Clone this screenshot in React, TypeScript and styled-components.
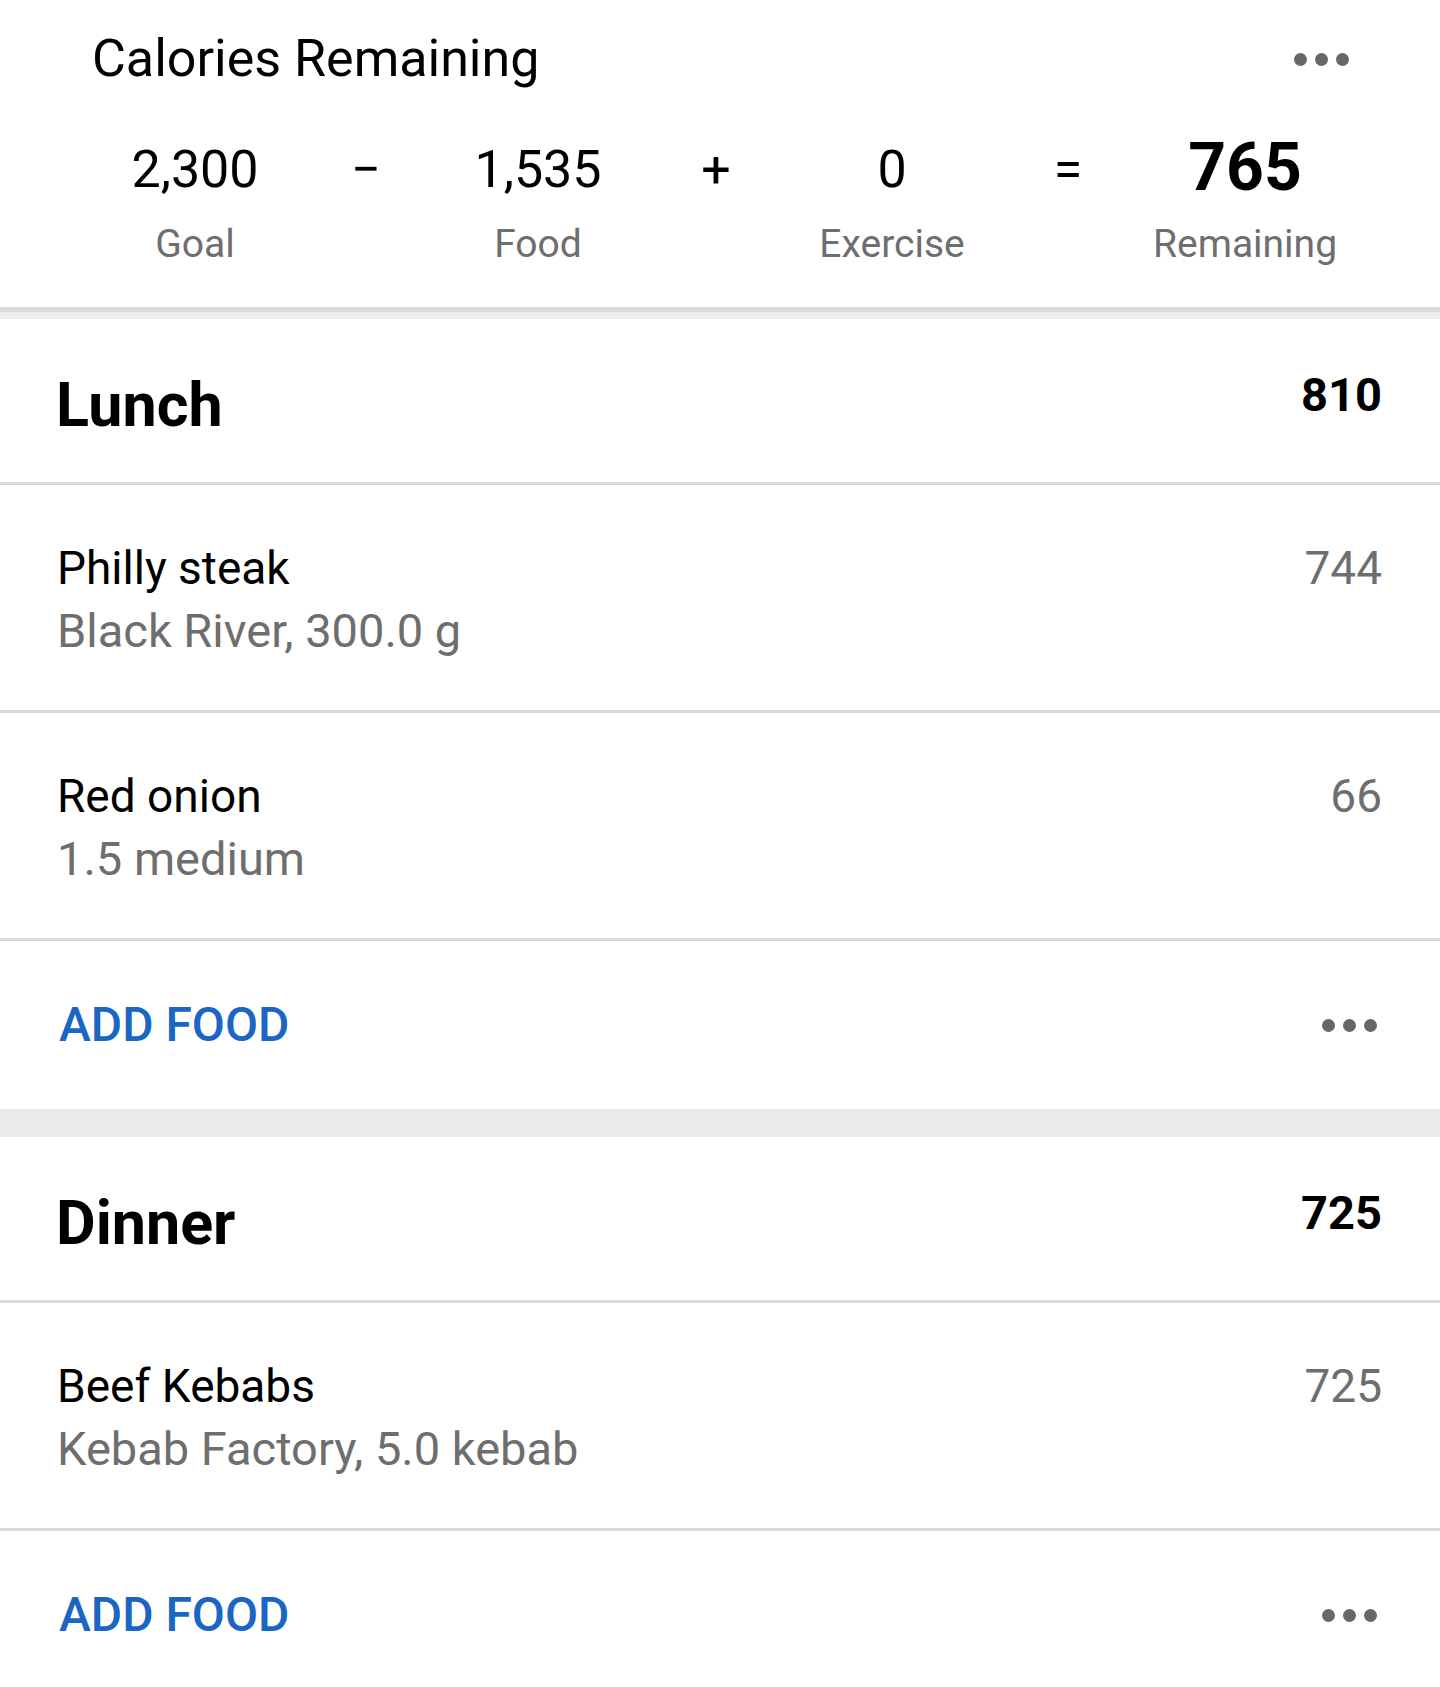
import React from 'react';
import styled, { createGlobalStyle } from 'styled-components';

const GlobalStyle = createGlobalStyle`
  html, body {
    margin: 0;
    padding: 0;
    background: #ffffff;
  }
  body {
    font-family: Roboto, "Liberation Sans", Arial, sans-serif;
    color: #000000;
  }
`;

type Food = { name: string; detail: string; calories: number };
type Meal = { title: string; total: number; foods: Food[] };

const MEALS: Meal[] = [
  {
    title: 'Lunch',
    total: 810,
    foods: [
      { name: 'Philly steak', detail: 'Black River, 300.0 g', calories: 744 },
      { name: 'Red onion', detail: '1.5 medium', calories: 66 },
    ],
  },
  {
    title: 'Dinner',
    total: 725,
    foods: [{ name: 'Beef Kebabs', detail: 'Kebab Factory, 5.0 kebab', calories: 725 }],
  },
];

const SUMMARY = [
  { value: '2,300', label: 'Goal' },
  { op: '−' },
  { value: '1,535', label: 'Food' },
  { op: '+' },
  { value: '0', label: 'Exercise' },
  { op: '=' },
  { value: '765', label: 'Remaining', strong: true },
];

function MoreDots() {
  return (
    <Dots>
      <Dot />
      <Dot />
      <Dot />
    </Dots>
  );
}

export default function App() {
  return (
    <Page>
      <GlobalStyle />
      <Summary>
        <SummaryTop>
          <SummaryTitle>Calories Remaining</SummaryTitle>
          <MoreDots />
        </SummaryTop>
        <Equation>
          {SUMMARY.map((item, i) =>
            'op' in item ? (
              <Operator key={i}>{item.op}</Operator>
            ) : (
              <Term key={i}>
                <TermValue $strong={!!item.strong}>{item.value}</TermValue>
                <TermLabel>{item.label}</TermLabel>
              </Term>
            ),
          )}
        </Equation>
      </Summary>
      <SummaryShadow />
      {MEALS.map((meal, mi) => (
        <React.Fragment key={meal.title}>
          {mi > 0 && <Gap />}
          <MealHeader>
            <MealTitle>{meal.title}</MealTitle>
            <MealTotal>{meal.total}</MealTotal>
          </MealHeader>
          {meal.foods.map((food) => (
            <FoodRow key={food.name}>
              <FoodInfo>
                <FoodName>{food.name}</FoodName>
                <FoodDetail>{food.detail}</FoodDetail>
              </FoodInfo>
              <FoodCalories>{food.calories}</FoodCalories>
            </FoodRow>
          ))}
          <AddRow>
            <AddFood>ADD FOOD</AddFood>
            <MoreDots />
          </AddRow>
        </React.Fragment>
      ))}
    </Page>
  );
}

const Page = styled.div`
  width: 1440px;
  background: #ffffff;
`;

const Summary = styled.section`
  height: 307px;
  box-sizing: border-box;
  padding: 33px 91px 0 92px;
`;

const SummaryTop = styled.div`
  display: flex;
  align-items: center;
  justify-content: space-between;
  height: 52px;
`;

const SummaryTitle = styled.div`
  font-size: 52px;
  line-height: 1;
  font-weight: 400;
  color: #000;
`;

const Dots = styled.div`
  display: flex;
  align-items: center;
  gap: 8px;
`;

const Dot = styled.span`
  width: 13px;
  height: 13px;
  border-radius: 50%;
  background: #676767;
`;

/* the value and operator columns are not evenly spaced in the app */
const Equation = styled.div`
  display: grid;
  grid-template-columns: 172px 170px 174px 182px 170px 182px 172px;
  margin: 52px 0 0 17px;
`;

const Term = styled.div`
  display: flex;
  flex-direction: column;
  align-items: center;
`;

const TermValue = styled.div<{ $strong: boolean }>`
  font-size: ${(p) => (p.$strong ? '66px' : '52px')};
  font-weight: ${(p) => (p.$strong ? 700 : 400)};
  line-height: 66px;
  height: 66px;
  color: #000;
  margin-top: ${(p) => (p.$strong ? '-2px' : '0')};
  margin-bottom: ${(p) => (p.$strong ? '2px' : '0')};
  white-space: nowrap;
`;

const TermLabel = styled.div`
  margin-top: 22px;
  font-size: 39px;
  line-height: 1;
  color: #6e6e6e;
  white-space: nowrap;
`;

const Operator = styled.div`
  text-align: center;
  font-size: 52px;
  line-height: 66px;
  height: 66px;
  color: #000;
`;

const SummaryShadow = styled.div`
  height: 5px;
  background: #d9d9d9;
  border-bottom: 7px solid #ececee;
`;

const MealHeader = styled.div`
  display: flex;
  justify-content: space-between;
  align-items: flex-start;
  height: 166px;
  box-sizing: border-box;
  padding: 52px 58px 0 56px;
  border-bottom: 3px solid #d9d9d9;
`;

const MealTitle = styled.div`
  margin-top: 4px;
  font-size: 61px;
  font-weight: 700;
  line-height: 1;
`;

const MealTotal = styled.div`
  font-size: 47px;
  font-weight: 700;
  line-height: 1;
`;

const FoodRow = styled.div`
  display: flex;
  justify-content: space-between;
  align-items: flex-start;
  height: 165px;
  padding: 60px 58px 0 57px;
  border-bottom: 3px solid #d9d9d9;
`;

const FoodInfo = styled.div`
  display: flex;
  flex-direction: column;
  gap: 16px;
`;

const FoodName = styled.div`
  font-size: 46px;
  line-height: 1;
  color: #000;
`;

const FoodDetail = styled.div`
  font-size: 47px;
  line-height: 1;
  color: #6e6e6e;
`;

const FoodCalories = styled.div`
  font-size: 46px;
  line-height: 1;
  color: #6e6e6e;
`;

const AddRow = styled.div`
  display: flex;
  align-items: center;
  justify-content: space-between;
  height: 168px;
  padding: 0 63px 0 59px;
`;

const AddFood = styled.div`
  font-size: 48px;
  line-height: 1;
  font-weight: 500;
  color: #1a66c4;
`;

const Gap = styled.div`
  height: 28px;
  background: #ebebee;
`;
